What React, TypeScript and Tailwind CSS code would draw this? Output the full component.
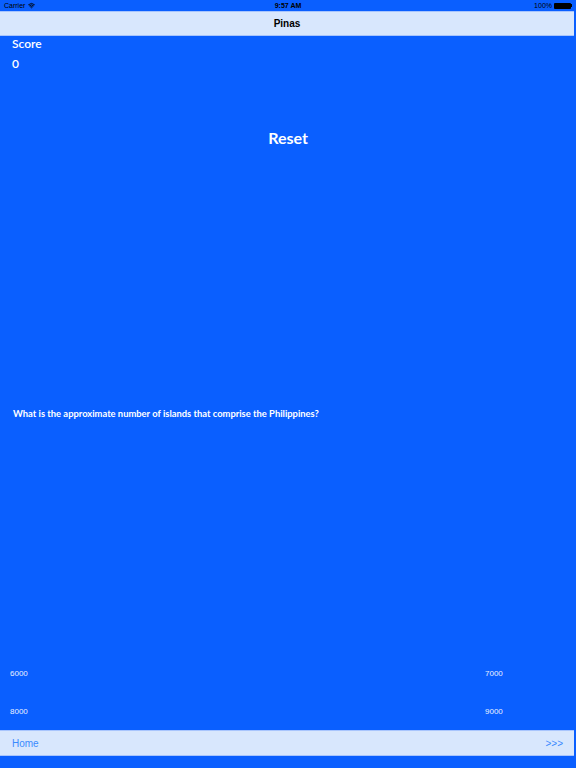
import { Wifi } from 'lucide-react';

const answers = [
  ['6000', '7000'],
  ['8000', '9000'],
];

function Battery() {
  return (
    <span className="flex items-center">
      <span className="w-[17px] h-[6px] bg-black rounded-[1px]" />
      <span className="w-[1px] h-[3px] bg-black" />
    </span>
  );
}

export default function App() {
  return (
    <div className="w-[576px] h-[768px] bg-[#0a5fff] flex flex-col overflow-hidden">
      {/* status bar */}
      <div className="h-[11px] flex items-center justify-between px-[4px] text-[7px] leading-none text-black font-['Liberation_Sans',sans-serif]">
        <div className="flex items-center gap-[3px] w-[80px]">
          <span>Carrier</span>
          <Wifi className="w-[7px] h-[7px]" strokeWidth={3} />
        </div>
        <span className="font-bold">9:57 AM</span>
        <div className="flex items-center justify-end gap-[2px] w-[80px]">
          <span>100%</span>
          <Battery />
        </div>
      </div>

      {/* nav bar */}
      <div className="h-[25px] mr-[2px] bg-[#d8e7fd] border-y border-[#a8c5fd] flex items-center justify-center">
        <span className="text-[10px] font-semibold text-black font-['Liberation_Sans',sans-serif]">
          Pinas
        </span>
      </div>

      <div className="flex flex-col text-white font-['Lato',sans-serif]">
        <div className="pl-[12px] text-[12px] leading-[14px] font-semibold mt-[1px]">Score</div>
        <div className="pl-[12px] text-[12px] leading-[14px] font-semibold mt-[6px]">0</div>

        <div className="mt-[57px] text-center text-[16px] leading-[20px] font-bold">Reset</div>

        <div className="mt-[260px] pl-[13px] text-[9.4px] leading-[12px] font-bold">
          What is the approximate number of islands that comprise the Philippines?
        </div>
      </div>

      <div className="mt-[249px] flex flex-col gap-[28px] text-[8px] leading-[10px] text-[#eaf1ff] font-['Liberation_Sans',sans-serif]">
        {answers.map(([a, b]) => (
          <div key={a} className="flex justify-between pl-[10px]">
            <span>{a}</span>
            <span className="w-[91px]">{b}</span>
          </div>
        ))}
      </div>

      {/* toolbar */}
      <div className="mt-[13px] h-[26px] mr-[2px] bg-[#d8e7fd] border-y border-[#a8c5fd] flex items-center justify-between pl-[12px] pr-[11px] text-[#3a8afd] font-['Liberation_Sans',sans-serif]">
        <span className="text-[10px]">Home</span>
        <span className="text-[10px]">&gt;&gt;&gt;</span>
      </div>
    </div>
  );
}
